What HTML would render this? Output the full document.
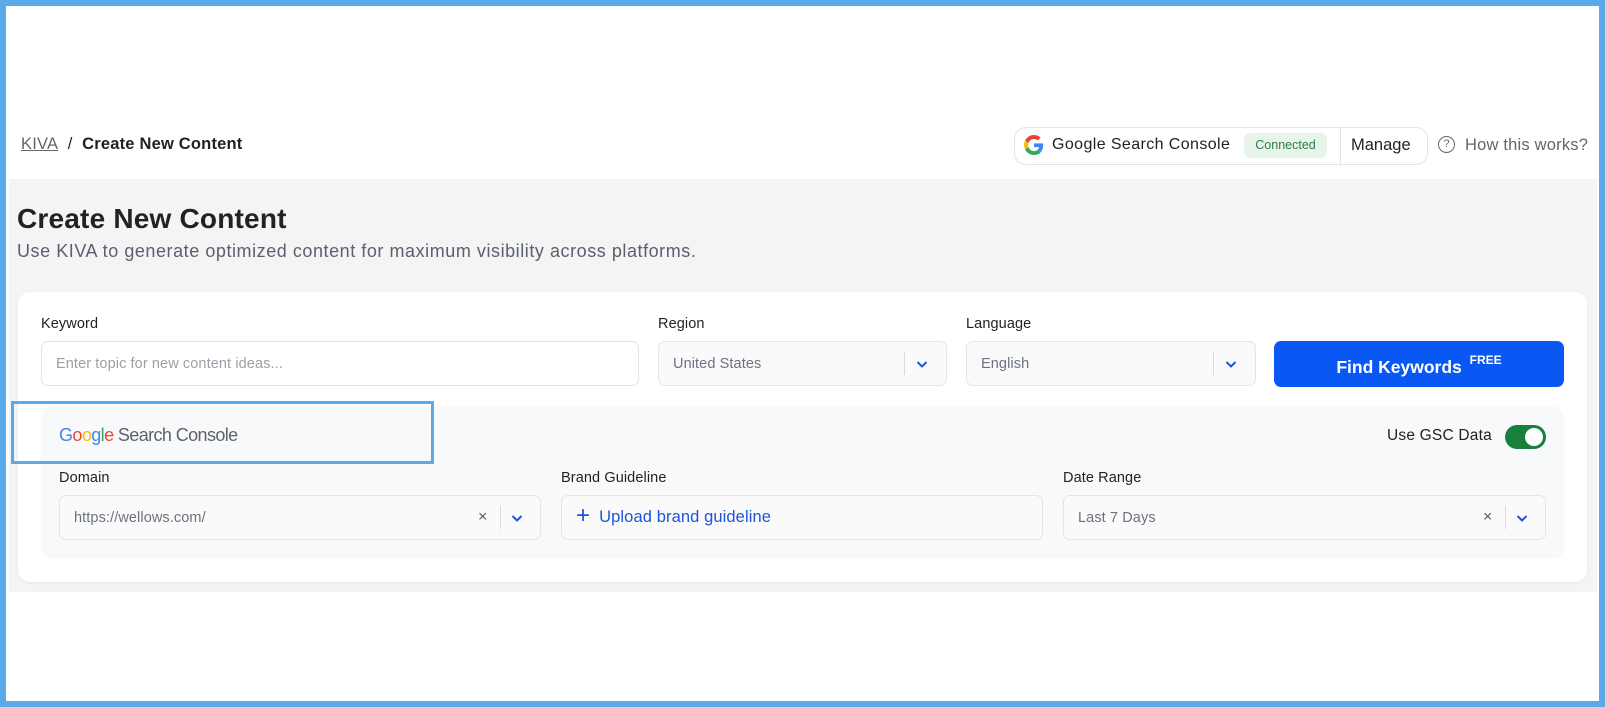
<!DOCTYPE html>
<html><head><meta charset="utf-8"><style>
*{box-sizing:border-box;margin:0;padding:0}
body{width:1605px;height:707px;background:#fff;font-family:"Liberation Sans",Arial,sans-serif;position:relative;overflow:hidden;color:#1f2328}
.a{position:absolute}
.frame{left:0;top:0;width:1605px;height:707px;border:6px solid #5aa9e9;z-index:10;pointer-events:none}
.lbl{font-size:14.5px;color:#222;letter-spacing:0.1px}
.inp{background:#fafafa;border:1px solid #e2e4e8;border-radius:7px;font-size:14.5px;color:#6b7280;display:flex;align-items:center;padding-left:14px;letter-spacing:0.1px}
.chev{position:absolute;top:50%;margin-top:-6px;width:12px;height:12px}
.sep{position:absolute;top:10px;bottom:10px;width:1px;background:#d8dade}
.x{position:absolute;top:50%;transform:translateY(-52%);font-size:16px;color:#555}
</style></head><body>
<div class="a frame"></div>

<div class="a" style="left:21px;top:135px;font-size:16.5px;color:#222;letter-spacing:0.2px"><span style="color:#666;text-decoration:underline">KIVA</span>&nbsp;&nbsp;/&nbsp;&nbsp;<b style="font-weight:600">Create New Content</b></div>

<div class="a" style="left:1014px;top:127px;width:414px;height:38px;border:1px solid #e2e4e8;border-radius:12px;background:#fff"></div>
<svg class="a" style="left:1024px;top:135px" width="20" height="20" viewBox="0 0 48 48"><path fill="#EA4335" d="M24 9.5c3.5 0 6.6 1.2 9.1 3.6l6.8-6.8C35.8 2.4 30.3 0 24 0 14.6 0 6.6 5.4 2.7 13.3l7.9 6.1C12.5 13.7 17.8 9.5 24 9.5z"/><path fill="#4285F4" d="M46.1 24.5c0-1.6-.1-3.1-.4-4.5H24v9h12.4c-.5 2.9-2.2 5.3-4.6 7l7.5 5.8c4.4-4 6.8-10 6.8-17.3z"/><path fill="#FBBC05" d="M10.5 28.6c-.5-1.4-.8-3-.8-4.6s.3-3.2.8-4.6l-7.9-6.1C1 16.6 0 20.2 0 24s1 7.4 2.7 10.7l7.8-6.1z"/><path fill="#34A853" d="M24 48c6.5 0 11.9-2.1 15.9-5.8l-7.5-5.8c-2.1 1.4-4.8 2.3-8.4 2.3-6.2 0-11.5-4.2-13.4-9.9l-7.9 6.1C6.6 42.6 14.6 48 24 48z"/></svg>
<div class="a" style="left:1052px;top:136px;font-size:16px;color:#222;letter-spacing:0.4px">Google Search Console</div>
<div class="a" style="left:1244px;top:133px;width:83px;height:25px;background:#e6f4ea;border-radius:6px;color:#2e7d4a;font-size:12.5px;text-align:center;line-height:25px">Connected</div>
<div class="a" style="left:1340px;top:128px;width:1px;height:36px;background:#e2e4e8"></div>
<div class="a" style="left:1351px;top:136px;font-size:16.5px;color:#222">Manage</div>
<div class="a" style="left:1438px;top:136px;width:17px;height:17px;border:1.5px solid #666;border-radius:50%;font-size:11px;text-align:center;line-height:14px;color:#666">?</div>
<div class="a" style="left:1465px;top:136px;font-size:16.5px;color:#666;letter-spacing:0.2px">How this works?</div>

<div class="a" style="left:9px;top:179px;width:1588px;height:413px;background:#f4f4f4"></div>
<div class="a" style="left:17px;top:203px;font-size:28px;font-weight:700;color:#222;letter-spacing:0.2px">Create New Content</div>
<div class="a" style="left:17px;top:241px;font-size:18px;color:#5a6070;letter-spacing:0.55px">Use KIVA to generate optimized content for maximum visibility across platforms.</div>

<div class="a" style="left:18px;top:292px;width:1569px;height:290px;background:#fff;border-radius:12px;box-shadow:0 1px 3px rgba(0,0,0,.06)"></div>

<div class="a lbl" style="left:41px;top:316px">Keyword</div>
<div class="a lbl" style="left:658px;top:316px">Region</div>
<div class="a lbl" style="left:966px;top:316px">Language</div>
<div class="a inp" style="left:41px;top:341px;width:598px;height:45px;background:#fff;color:#9aa0a8">Enter topic for new content ideas...</div>
<div class="a inp" style="left:658px;top:341px;width:289px;height:45px">United States<div class="sep" style="left:245px"></div><svg class="chev" style="left:257px" viewBox="0 0 12 12"><path d="M1.5 4l4.5 4.5L10.5 4" fill="none" stroke="#1a56db" stroke-width="2"/></svg></div>
<div class="a inp" style="left:966px;top:341px;width:290px;height:45px">English<div class="sep" style="left:246px"></div><svg class="chev" style="left:258px" viewBox="0 0 12 12"><path d="M1.5 4l4.5 4.5L10.5 4" fill="none" stroke="#1a56db" stroke-width="2"/></svg></div>
<div class="a" style="left:1274px;top:341px;width:290px;height:46px;background:#0a58f3;border-radius:7px;color:#fff;font-size:17.5px;font-weight:600;text-align:center;line-height:42px">Find Keywords <sup style="font-size:12px;position:relative;top:-2px;margin-left:3px">FREE</sup></div>

<div class="a" style="left:41px;top:406px;width:1523px;height:153px;background:#f8f9fa;border-radius:12px"></div>
<div class="a" style="left:11px;top:401px;width:423px;height:63px;border:3px solid #5aa9e9"></div>
<div class="a" style="left:59px;top:425px;font-size:18px;letter-spacing:-0.6px"><span style="color:#4285F4">G</span><span style="color:#EA4335">o</span><span style="color:#FBBC05">o</span><span style="color:#4285F4">g</span><span style="color:#34A853">l</span><span style="color:#EA4335">e</span> <span style="color:#5f6368">Search Console</span></div>
<div class="a" style="left:1387px;top:427px;font-size:15.5px;color:#222;letter-spacing:0.2px">Use GSC Data</div>
<div class="a" style="left:1505px;top:425px;width:41px;height:24px;background:#17803d;border-radius:12px"><div class="a" style="left:20px;top:3px;width:18px;height:18px;background:#fff;border-radius:50%"></div></div>

<div class="a lbl" style="left:59px;top:470px">Domain</div>
<div class="a lbl" style="left:561px;top:470px">Brand Guideline</div>
<div class="a lbl" style="left:1063px;top:470px">Date Range</div>
<div class="a inp" style="left:59px;top:495px;width:482px;height:45px">https://wellows.com/<span class="x" style="left:418px">×</span><div class="sep" style="left:440px"></div><svg class="chev" style="left:451px" viewBox="0 0 12 12"><path d="M1.5 4l4.5 4.5L10.5 4" fill="none" stroke="#1a56db" stroke-width="2"/></svg></div>
<div class="a inp" style="left:561px;top:495px;width:482px;height:45px;color:#1a56db;font-size:16.5px"><span style="font-size:24px;margin-right:9px;margin-top:-3px">+</span>Upload brand guideline</div>
<div class="a inp" style="left:1063px;top:495px;width:483px;height:45px">Last 7 Days<span class="x" style="left:419px">×</span><div class="sep" style="left:441px"></div><svg class="chev" style="left:452px" viewBox="0 0 12 12"><path d="M1.5 4l4.5 4.5L10.5 4" fill="none" stroke="#1a56db" stroke-width="2"/></svg></div>
</body></html>
